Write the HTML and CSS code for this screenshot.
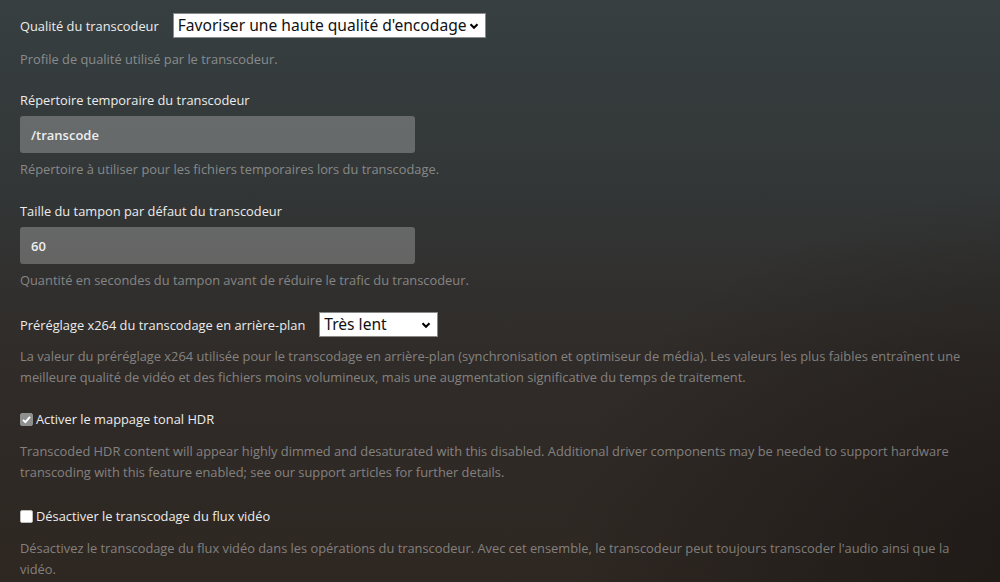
FILE: index.html
```html
<!DOCTYPE html>
<html lang="fr">
<head>
<meta charset="utf-8">
<title>Transcodeur</title>
<link rel="stylesheet" href="styles.css">
</head>
<body>
<main class="settings">
  <section class="group group-first">
    <div class="inline-row">
      <label class="label" for="q">Qualité du transcodeur</label>
      <span class="select-wrap">
        <select id="q" class="select select-wide">
          <option>Favoriser une haute qualité d'encodage</option>
        </select>
        <svg class="chev" viewBox="0 0 10 10" width="10" height="10"><path d="M1.5 3.2 L5 6.7 L8.5 3.2" fill="none" stroke="#000" stroke-width="2.1"/></svg>
      </span>
    </div>
    <p class="help help-after-select">Profile de qualité utilisé par le transcodeur.</p>
  </section>

  <section class="group">
    <label class="label block" for="dir">Répertoire temporaire du transcodeur</label>
    <input id="dir" class="text-input" type="text" value="/transcode">
    <p class="help">Répertoire à utiliser pour les fichiers temporaires lors du transcodage.</p>
  </section>

  <section class="group">
    <label class="label block" for="buf">Taille du tampon par défaut du transcodeur</label>
    <input id="buf" class="text-input" type="text" value="60">
    <p class="help">Quantité en secondes du tampon avant de réduire le trafic du transcodeur.</p>
  </section>

  <section class="group">
    <div class="inline-row">
      <label class="label" for="preset">Préréglage x264 du transcodage en arrière-plan</label>
      <span class="select-wrap">
        <select id="preset" class="select select-small">
          <option>Très lent</option>
        </select>
        <svg class="chev" viewBox="0 0 10 10" width="10" height="10"><path d="M1.5 3.2 L5 6.7 L8.5 3.2" fill="none" stroke="#000" stroke-width="2.1"/></svg>
      </span>
    </div>
    <p class="help help-after-select2">La valeur du préréglage x264 utilisée pour le transcodage en arrière-plan (synchronisation et optimiseur de média). Les valeurs les plus faibles entraînent une meilleure qualité de vidéo et des fichiers moins volumineux, mais une augmentation significative du temps de traitement.</p>
  </section>

  <section class="group group-check">
    <label class="check-row">
      <span class="box checked">
        <svg viewBox="0 0 13 13" width="13" height="13"><path d="M3 6.8 L5.4 9.2 L10 3.8" fill="none" stroke="#fff" stroke-width="1.9"/></svg>
      </span>
      <span class="label">Activer le mappage tonal HDR</span>
    </label>
    <p class="help help-after-check">Transcoded HDR content will appear highly dimmed and desaturated with this disabled. Additional driver components may be needed to support hardware transcoding with this feature enabled; see our support articles for further details.</p>
  </section>

  <section class="group">
    <label class="check-row">
      <span class="box"></span>
      <span class="label">Désactiver le transcodage du flux vidéo</span>
    </label>
    <p class="help help-after-check">Désactivez le transcodage du flux vidéo dans les opérations du transcodeur. Avec cet ensemble, le transcodeur peut toujours transcoder l'audio ainsi que la vidéo.</p>
  </section>
</main>
</body>
</html>
```

FILE: styles.css
```css
html, body {
  margin: 0;
  height: 100%;
}
body {
  font-family: "Open Sans", "Noto Sans", sans-serif;
  font-size: 12.85px;
  color: #eeeeee;
  background:
    radial-gradient(ellipse 70% 90% at 105% 95%, rgba(20, 16, 14, 0.6), rgba(20, 16, 14, 0) 70%),
    linear-gradient(180deg, #373f40 0%, #333738 30%, #302c29 60%, #2e2722 100%);
  overflow: hidden;
}
.settings {
  padding: 13px 20px 0 20px;
  max-width: 960px;
}
.group {
  margin: 0 0 21px 0;
}
.group-first {
  margin-bottom: 20px;
}
.group-check {
  margin-bottom: 23px;
}
.inline-row {
  display: flex;
  align-items: center;
  gap: 14px;
}
.label {
  display: inline-block;
  line-height: 20px;
  color: #ececec;
  font-weight: 500;
}
.label.block {
  display: block;
  margin-bottom: 6px;
}
.select-wrap {
  position: relative;
  display: inline-block;
}
.select {
  appearance: none;
  -webkit-appearance: none;
  background: #fff;
  color: #111;
  border: 1px solid #8a8a8a;
  border-radius: 0;
  margin: 0;
  font-family: "Noto Sans", "Open Sans", sans-serif;
  font-size: 15.6px;
  height: 25px;
  padding: 0 16px 0 4px;
  line-height: 23px;
  display: block;
}
.select-wide {
  width: 313px;
}
.select-small {
  width: 119px;
}
.chev {
  position: absolute;
  right: 7px;
  top: 8px;
  pointer-events: none;
}
.text-input {
  display: block;
  box-sizing: border-box;
  width: 395px;
  height: 37px;
  border: 0;
  border-radius: 3px;
  background: rgba(255, 255, 255, 0.25);
  color: #eeeeee;
  font-family: "Open Sans", sans-serif;
  font-size: 13px;
  font-weight: 600;
  padding: 0 11px;
  margin: 0;
  outline: none;
}
.help {
  margin: 6px 0 0 0;
  line-height: 21px;
  color: rgba(255, 255, 255, 0.42);
}
.help-after-select {
  margin-top: 11px;
}
.help-after-select2 {
  margin-top: 9px;
}
.help-after-check {
  margin-top: 12px;
}
.check-row {
  display: flex;
  align-items: center;
  gap: 3px;
  height: 20px;
}
.box {
  box-sizing: border-box;
  width: 13px;
  height: 13px;
  background: #fff;
  border: 1px solid #bbb;
  border-radius: 2px;
  display: inline-block;
  flex: none;
}
.box.checked {
  background: #8f8f8f;
  border-color: #8f8f8f;
}
.box svg {
  display: block;
  margin: -1px;
}
```
